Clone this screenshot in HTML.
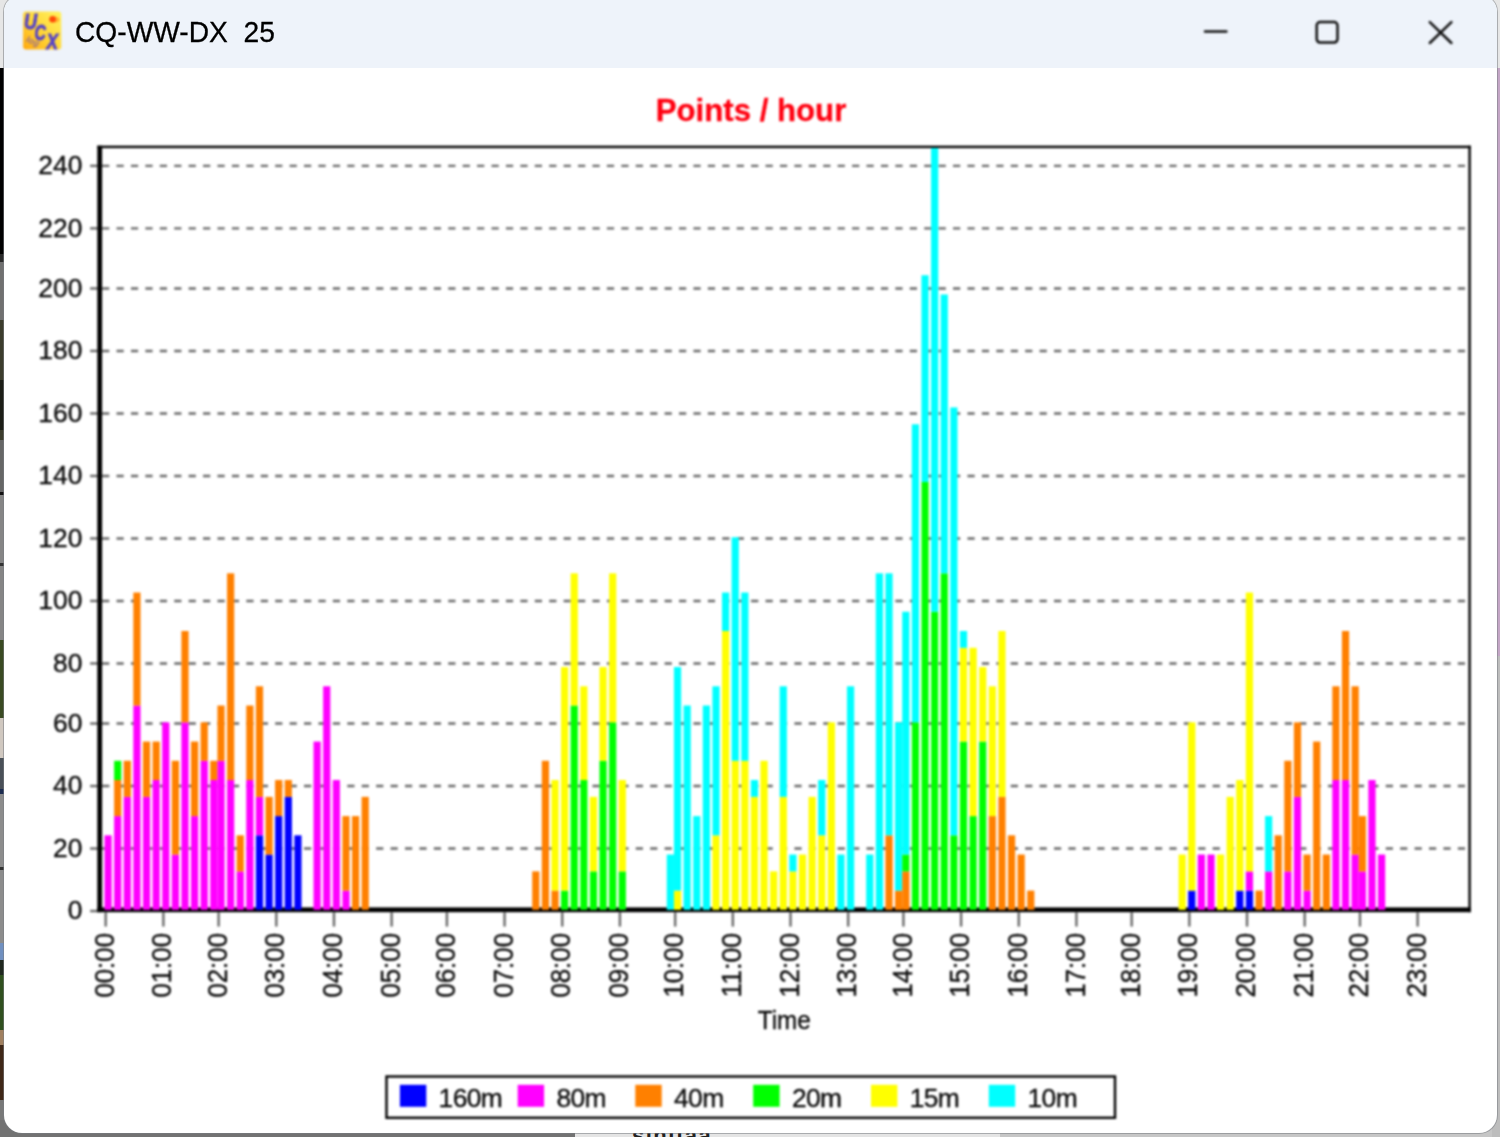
<!DOCTYPE html>
<html lang="en">
<head>
<meta charset="utf-8">
<title>CQ-WW-DX 25</title>
<style>
html,body{margin:0;padding:0}
body{width:1500px;height:1137px;overflow:hidden;position:relative;background:#7c7c7c;font-family:"Liberation Sans",Arial,sans-serif}
.strip{position:absolute;left:0;width:8px}
.rstrip{position:absolute;right:0;width:8px}
#win{position:absolute;left:3.6px;top:-5px;width:1493.6px;height:1137.6px;border-radius:17px 17px 18px 18px;background:#fff;overflow:hidden;box-shadow:0 0 0 1px rgba(120,124,130,.55)}
#tb{position:absolute;left:0;top:0;right:0;height:72.6px;background:#eef3fa}
#ttl{position:absolute;left:71.6px;top:20.2px;font-size:29.4px;line-height:34px;color:#000;-webkit-text-stroke:.3px #000;white-space:pre;transform:scaleX(.959);transform-origin:0 0}
svg{position:absolute;left:0;top:0;filter:blur(.9px)}
#win{filter:blur(.7px)}
svg text{font-family:"Liberation Sans",Arial,sans-serif;font-size:26.4px;fill:#0a0a0a;stroke:#0a0a0a;stroke-width:.35px}
.g{stroke:#6a6a6a;stroke-width:2.4;stroke-dasharray:7.2114 7.2114}
</style>
</head>
<body>
<div class="strip" style="top:0;height:68px;background:#e6e6e6"></div>
<div class="strip" style="top:68px;height:190px;background:#000"></div>
<div class="strip" style="top:258px;height:62px;background:#707070"></div>
<div class="strip" style="top:320px;height:120px;background:#3c3c2c"></div>
<div class="strip" style="top:440px;height:55px;background:#666"></div>
<div class="strip" style="top:495px;height:145px;background:#858585"></div>
<div class="strip" style="top:640px;height:78px;background:#3a4a22"></div>
<div class="strip" style="top:718px;height:40px;background:#d0c8c0"></div>
<div class="strip" style="top:758px;height:36px;background:#4a5058"></div>
<div class="strip" style="top:794px;height:149px;background:#8c8c8c"></div>
<div class="strip" style="top:943px;height:17px;background:#7090c0"></div>
<div class="strip" style="top:960px;height:15px;background:#202820"></div>
<div class="strip" style="top:975px;height:55px;background:#305020"></div>
<div class="strip" style="top:1030px;height:15px;background:#a08060"></div>
<div class="strip" style="top:1045px;height:55px;background:#402818"></div>
<div class="strip" style="top:1100px;height:37px;background:#787878"></div>
<div class="strip" style="top:254px;height:8px;background:#2a2a2a"></div>
<div class="strip" style="top:380px;height:50px;background:#1c1e16"></div>
<div class="strip" style="top:492px;height:3px;background:#111"></div>
<div class="strip" style="top:563px;height:3px;background:#333"></div>
<div class="strip" style="top:789px;height:5px;background:#1c2c50"></div>
<div class="strip" style="top:867px;height:3px;background:#333"></div>
<div style="position:absolute;left:0;top:1120px;width:575px;height:17px;background:#727272"></div>
<div style="position:absolute;left:575px;top:1120px;width:425px;height:17px;background:#e4e4e4"></div>
<div style="position:absolute;left:1000px;top:1120px;width:500px;height:17px;background:#c6c6c6"></div>
<div style="position:absolute;left:632px;top:1125px;font-size:22px;line-height:22px;font-weight:bold;color:#222;letter-spacing:1.5px">sınıfaa</div>
<div class="rstrip" style="top:0;height:68px;background:#e6e6e6"></div>
<div class="rstrip" style="top:68px;height:588px;background:#c4a6c6"></div>
<div class="rstrip" style="top:656px;height:481px;background:#bdbdbd"></div>

<div id="win">
  <div id="tb"></div>
  <div id="ttl">CQ-WW-DX  25</div>
</div>

<svg width="1500" height="1137" viewBox="0 0 1500 1137">
  <defs>
    <linearGradient id="ig" x1="1" y1="0" x2="0" y2="1">
      <stop offset="0" stop-color="#fff25e"/>
      <stop offset="0.5" stop-color="#ffd83a"/>
      <stop offset="1" stop-color="#ffa80e"/>
    </linearGradient>
  </defs>
  <!-- app icon -->
  <g>
    <rect x="23.1" y="11.4" width="38.2" height="38.1" rx="3" fill="url(#ig)"/>
    <ellipse cx="54.5" cy="19.6" rx="5" ry="3" fill="#ff9a20" opacity=".7"/>
    <circle cx="52.6" cy="19.2" r="3.3" fill="#ff4a08"/>
    <g style="font-weight:bold;font-style:italic;fill:#5c4cc6;stroke:none">
      <text transform="translate(24 28.8) scale(.8 1)" style="font-size:22.6px;fill:#5443c8;stroke:#5443c8;stroke-width:.9px">U</text>
      <text transform="translate(34.6 39.7) scale(.7 1)" style="font-size:22.4px;fill:#5443c8;stroke:#5443c8;stroke-width:.9px">C</text>
      <text transform="translate(46.6 48.7) scale(.8 1)" style="font-size:21.4px;fill:#5443c8;stroke:#5443c8;stroke-width:.9px">X</text>
      <text transform="translate(25.5 41.5) rotate(22)" style="font-size:9px;fill:#7a58b0;opacity:.75;stroke:none">log</text>
    </g>
  </g>
  <!-- window buttons -->
  <g fill="none" stroke="#111" stroke-width="2.5" stroke-linecap="round">
    <line x1="1205" y1="31.4" x2="1226.4" y2="31.4"/>
    <rect x="1316.7" y="22.1" width="20.8" height="20.4" rx="3.4"/>
    <path d="M1429.8 22.2 L1451.4 43 M1451.4 22.2 L1429.8 43"/>
  </g>

  <!-- chart title -->
  <text x="751" y="120.7" text-anchor="middle" style="font-size:31.2px;font-weight:bold;fill:#ff0010;stroke:#ff0010;stroke-width:.3px">Points / hour</text>

  <!-- grid -->
<line x1="102.1" y1="848.54" x2="1468.4" y2="848.54" class="g"/>
<line x1="102.1" y1="786.04" x2="1468.4" y2="786.04" class="g"/>
<line x1="102.1" y1="723.54" x2="1468.4" y2="723.54" class="g"/>
<line x1="102.1" y1="663.45" x2="1468.4" y2="663.45" class="g"/>
<line x1="102.1" y1="600.95" x2="1468.4" y2="600.95" class="g"/>
<line x1="102.1" y1="538.45" x2="1468.4" y2="538.45" class="g"/>
<line x1="102.1" y1="475.95" x2="1468.4" y2="475.95" class="g"/>
<line x1="102.1" y1="413.45" x2="1468.4" y2="413.45" class="g"/>
<line x1="102.1" y1="350.95" x2="1468.4" y2="350.95" class="g"/>
<line x1="102.1" y1="288.46" x2="1468.4" y2="288.46" class="g"/>
<line x1="102.1" y1="228.36" x2="1468.4" y2="228.36" class="g"/>
<line x1="102.1" y1="165.86" x2="1468.4" y2="165.86" class="g"/>
<rect x="90.1" y="909.84" width="7.6" height="2.4" fill="#6a6a6a"/>
<rect x="90.1" y="847.34" width="7.6" height="2.4" fill="#6a6a6a"/>
<rect x="90.1" y="784.84" width="7.6" height="2.4" fill="#6a6a6a"/>
<rect x="90.1" y="722.34" width="7.6" height="2.4" fill="#6a6a6a"/>
<rect x="90.1" y="662.25" width="7.6" height="2.4" fill="#6a6a6a"/>
<rect x="90.1" y="599.75" width="7.6" height="2.4" fill="#6a6a6a"/>
<rect x="90.1" y="537.25" width="7.6" height="2.4" fill="#6a6a6a"/>
<rect x="90.1" y="474.75" width="7.6" height="2.4" fill="#6a6a6a"/>
<rect x="90.1" y="412.25" width="7.6" height="2.4" fill="#6a6a6a"/>
<rect x="90.1" y="349.75" width="7.6" height="2.4" fill="#6a6a6a"/>
<rect x="90.1" y="287.26" width="7.6" height="2.4" fill="#6a6a6a"/>
<rect x="90.1" y="227.16" width="7.6" height="2.4" fill="#6a6a6a"/>
<rect x="90.1" y="164.66" width="7.6" height="2.4" fill="#6a6a6a"/>
  <!-- frame: top and right -->
  <rect x="97.3" y="145.7" width="1373.5" height="2.4" fill="#000"/>
  <rect x="1468.4" y="145.7" width="2.4" height="766.5" fill="#000"/>
  <!-- axes -->
  <rect x="97.3" y="145.7" width="4.8" height="766.5" fill="#000"/>
  <rect x="97.3" y="907.4" width="1373.5" height="4.8" fill="#000"/>
  <!-- bars -->
<rect x="104.5" y="835.32" width="7.2" height="74.52" fill="#ff00ff"/>
<rect x="114.11" y="816.09" width="7.2" height="93.75" fill="#ff00ff"/>
<rect x="114.11" y="780.03" width="7.2" height="36.06" fill="#ff8000"/>
<rect x="114.11" y="760.8" width="7.2" height="19.23" fill="#00ff00"/>
<rect x="123.72" y="796.86" width="7.2" height="112.98" fill="#ff00ff"/>
<rect x="123.72" y="760.8" width="7.2" height="36.06" fill="#ff8000"/>
<rect x="133.33" y="705.52" width="7.2" height="204.32" fill="#ff00ff"/>
<rect x="133.33" y="592.54" width="7.2" height="112.98" fill="#ff8000"/>
<rect x="142.94" y="796.86" width="7.2" height="112.98" fill="#ff00ff"/>
<rect x="142.94" y="741.57" width="7.2" height="55.29" fill="#ff8000"/>
<rect x="152.56" y="780.03" width="7.2" height="129.81" fill="#ff00ff"/>
<rect x="152.56" y="741.57" width="7.2" height="38.46" fill="#ff8000"/>
<rect x="162.17" y="722.34" width="7.2" height="187.5" fill="#ff00ff"/>
<rect x="171.78" y="854.55" width="7.2" height="55.29" fill="#ff00ff"/>
<rect x="171.78" y="760.8" width="7.2" height="93.75" fill="#ff8000"/>
<rect x="181.39" y="722.34" width="7.2" height="187.5" fill="#ff00ff"/>
<rect x="181.39" y="631" width="7.2" height="91.34" fill="#ff8000"/>
<rect x="191" y="816.09" width="7.2" height="93.75" fill="#ff00ff"/>
<rect x="191" y="741.57" width="7.2" height="74.52" fill="#ff8000"/>
<rect x="200.61" y="760.8" width="7.2" height="149.04" fill="#ff00ff"/>
<rect x="200.61" y="722.34" width="7.2" height="38.46" fill="#ff8000"/>
<rect x="210.22" y="780.03" width="7.2" height="129.81" fill="#ff00ff"/>
<rect x="210.22" y="760.8" width="7.2" height="19.23" fill="#ff8000"/>
<rect x="217.43" y="760.8" width="7.2" height="149.04" fill="#ff00ff"/>
<rect x="217.43" y="705.52" width="7.2" height="55.29" fill="#ff8000"/>
<rect x="227.04" y="780.03" width="7.2" height="129.81" fill="#ff00ff"/>
<rect x="227.04" y="573.31" width="7.2" height="206.73" fill="#ff8000"/>
<rect x="236.65" y="871.38" width="7.2" height="38.46" fill="#ff00ff"/>
<rect x="236.65" y="835.32" width="7.2" height="36.06" fill="#ff8000"/>
<rect x="246.27" y="780.03" width="7.2" height="129.81" fill="#ff00ff"/>
<rect x="246.27" y="705.52" width="7.2" height="74.52" fill="#ff8000"/>
<rect x="255.88" y="835.32" width="7.2" height="74.52" fill="#0000ff"/>
<rect x="255.88" y="796.86" width="7.2" height="38.46" fill="#ff00ff"/>
<rect x="255.88" y="686.28" width="7.2" height="110.57" fill="#ff8000"/>
<rect x="265.49" y="854.55" width="7.2" height="55.29" fill="#0000ff"/>
<rect x="265.49" y="796.86" width="7.2" height="57.69" fill="#ff8000"/>
<rect x="275.1" y="816.09" width="7.2" height="93.75" fill="#0000ff"/>
<rect x="275.1" y="780.03" width="7.2" height="36.06" fill="#ff8000"/>
<rect x="284.71" y="796.86" width="7.2" height="112.98" fill="#0000ff"/>
<rect x="284.71" y="780.03" width="7.2" height="16.83" fill="#ff8000"/>
<rect x="294.32" y="835.32" width="7.2" height="74.52" fill="#0000ff"/>
<rect x="313.54" y="741.57" width="7.2" height="168.27" fill="#ff00ff"/>
<rect x="323.15" y="686.28" width="7.2" height="223.55" fill="#ff00ff"/>
<rect x="332.77" y="780.03" width="7.2" height="129.81" fill="#ff00ff"/>
<rect x="342.38" y="890.61" width="7.2" height="19.23" fill="#ff00ff"/>
<rect x="342.38" y="816.09" width="7.2" height="74.52" fill="#ff8000"/>
<rect x="351.99" y="816.09" width="7.2" height="93.75" fill="#ff8000"/>
<rect x="361.6" y="796.86" width="7.2" height="112.98" fill="#ff8000"/>
<rect x="532.2" y="871.38" width="7.2" height="38.46" fill="#ff8000"/>
<rect x="541.81" y="760.8" width="7.2" height="149.04" fill="#ff8000"/>
<rect x="551.42" y="890.61" width="7.2" height="19.23" fill="#ff8000"/>
<rect x="551.42" y="780.03" width="7.2" height="110.57" fill="#ffff00"/>
<rect x="561.03" y="890.61" width="7.2" height="19.23" fill="#00ff00"/>
<rect x="561.03" y="667.05" width="7.2" height="223.55" fill="#ffff00"/>
<rect x="570.64" y="705.52" width="7.2" height="204.32" fill="#00ff00"/>
<rect x="570.64" y="573.31" width="7.2" height="132.21" fill="#ffff00"/>
<rect x="580.25" y="780.03" width="7.2" height="129.81" fill="#00ff00"/>
<rect x="580.25" y="686.28" width="7.2" height="93.75" fill="#ffff00"/>
<rect x="589.87" y="871.38" width="7.2" height="38.46" fill="#00ff00"/>
<rect x="589.87" y="796.86" width="7.2" height="74.52" fill="#ffff00"/>
<rect x="599.48" y="760.8" width="7.2" height="149.04" fill="#00ff00"/>
<rect x="599.48" y="667.05" width="7.2" height="93.75" fill="#ffff00"/>
<rect x="609.09" y="722.34" width="7.2" height="187.5" fill="#00ff00"/>
<rect x="609.09" y="573.31" width="7.2" height="149.04" fill="#ffff00"/>
<rect x="618.7" y="871.38" width="7.2" height="38.46" fill="#00ff00"/>
<rect x="618.7" y="780.03" width="7.2" height="91.34" fill="#ffff00"/>
<rect x="666.76" y="854.55" width="7.2" height="55.29" fill="#00ffff"/>
<rect x="673.96" y="890.61" width="7.2" height="19.23" fill="#ffff00"/>
<rect x="673.96" y="667.05" width="7.2" height="223.55" fill="#00ffff"/>
<rect x="683.57" y="705.52" width="7.2" height="204.32" fill="#00ffff"/>
<rect x="693.19" y="816.09" width="7.2" height="93.75" fill="#00ffff"/>
<rect x="702.8" y="705.52" width="7.2" height="204.32" fill="#00ffff"/>
<rect x="712.41" y="835.32" width="7.2" height="74.52" fill="#ffff00"/>
<rect x="712.41" y="686.28" width="7.2" height="149.04" fill="#00ffff"/>
<rect x="722.02" y="631" width="7.2" height="278.84" fill="#ffff00"/>
<rect x="722.02" y="592.54" width="7.2" height="38.46" fill="#00ffff"/>
<rect x="731.63" y="760.8" width="7.2" height="149.04" fill="#ffff00"/>
<rect x="731.63" y="537.25" width="7.2" height="223.55" fill="#00ffff"/>
<rect x="741.24" y="760.8" width="7.2" height="149.04" fill="#ffff00"/>
<rect x="741.24" y="592.54" width="7.2" height="168.27" fill="#00ffff"/>
<rect x="750.85" y="796.86" width="7.2" height="112.98" fill="#ffff00"/>
<rect x="750.85" y="780.03" width="7.2" height="16.83" fill="#00ffff"/>
<rect x="760.46" y="760.8" width="7.2" height="149.04" fill="#ffff00"/>
<rect x="770.08" y="871.38" width="7.2" height="38.46" fill="#ffff00"/>
<rect x="779.69" y="796.86" width="7.2" height="112.98" fill="#ffff00"/>
<rect x="779.69" y="686.28" width="7.2" height="110.57" fill="#00ffff"/>
<rect x="789.3" y="871.38" width="7.2" height="38.46" fill="#ffff00"/>
<rect x="789.3" y="854.55" width="7.2" height="16.83" fill="#00ffff"/>
<rect x="798.91" y="854.55" width="7.2" height="55.29" fill="#ffff00"/>
<rect x="808.52" y="796.86" width="7.2" height="112.98" fill="#ffff00"/>
<rect x="818.13" y="835.32" width="7.2" height="74.52" fill="#ffff00"/>
<rect x="818.13" y="780.03" width="7.2" height="55.29" fill="#00ffff"/>
<rect x="827.74" y="722.34" width="7.2" height="187.5" fill="#ffff00"/>
<rect x="837.35" y="854.55" width="7.2" height="55.29" fill="#00ffff"/>
<rect x="846.97" y="686.28" width="7.2" height="223.55" fill="#00ffff"/>
<rect x="866.19" y="854.55" width="7.2" height="55.29" fill="#00ffff"/>
<rect x="875.8" y="573.31" width="7.2" height="336.53" fill="#00ffff"/>
<rect x="885.41" y="835.32" width="7.2" height="74.52" fill="#ff8000"/>
<rect x="885.41" y="573.31" width="7.2" height="262.01" fill="#00ffff"/>
<rect x="895.02" y="890.61" width="7.2" height="19.23" fill="#ff8000"/>
<rect x="895.02" y="722.34" width="7.2" height="168.27" fill="#00ffff"/>
<rect x="902.23" y="871.38" width="7.2" height="38.46" fill="#ff8000"/>
<rect x="902.23" y="854.55" width="7.2" height="16.83" fill="#00ff00"/>
<rect x="902.23" y="611.77" width="7.2" height="242.78" fill="#00ffff"/>
<rect x="911.84" y="722.34" width="7.2" height="187.5" fill="#00ff00"/>
<rect x="911.84" y="424.27" width="7.2" height="298.07" fill="#00ffff"/>
<rect x="921.45" y="481.96" width="7.2" height="427.88" fill="#00ff00"/>
<rect x="921.45" y="275.24" width="7.2" height="206.73" fill="#00ffff"/>
<rect x="931.06" y="611.77" width="7.2" height="298.07" fill="#00ff00"/>
<rect x="931.06" y="148.1" width="7.2" height="463.67" fill="#00ffff"/>
<rect x="940.67" y="573.31" width="7.2" height="336.53" fill="#00ff00"/>
<rect x="940.67" y="294.47" width="7.2" height="278.84" fill="#00ffff"/>
<rect x="950.29" y="835.32" width="7.2" height="74.52" fill="#00ff00"/>
<rect x="950.29" y="407.44" width="7.2" height="427.88" fill="#00ffff"/>
<rect x="959.9" y="741.57" width="7.2" height="168.27" fill="#00ff00"/>
<rect x="959.9" y="647.82" width="7.2" height="93.75" fill="#ffff00"/>
<rect x="959.9" y="631" width="7.2" height="16.83" fill="#00ffff"/>
<rect x="969.51" y="816.09" width="7.2" height="93.75" fill="#00ff00"/>
<rect x="969.51" y="647.82" width="7.2" height="168.27" fill="#ffff00"/>
<rect x="979.12" y="741.57" width="7.2" height="168.27" fill="#00ff00"/>
<rect x="979.12" y="667.05" width="7.2" height="74.52" fill="#ffff00"/>
<rect x="988.73" y="816.09" width="7.2" height="93.75" fill="#ff8000"/>
<rect x="988.73" y="686.28" width="7.2" height="129.81" fill="#ffff00"/>
<rect x="998.34" y="796.86" width="7.2" height="112.98" fill="#ff8000"/>
<rect x="998.34" y="631" width="7.2" height="165.86" fill="#ffff00"/>
<rect x="1007.95" y="835.32" width="7.2" height="74.52" fill="#ff8000"/>
<rect x="1017.56" y="854.55" width="7.2" height="55.29" fill="#ff8000"/>
<rect x="1027.18" y="890.61" width="7.2" height="19.23" fill="#ff8000"/>
<rect x="1178.55" y="854.55" width="7.2" height="55.29" fill="#ffff00"/>
<rect x="1188.16" y="890.61" width="7.2" height="19.23" fill="#0000ff"/>
<rect x="1188.16" y="722.34" width="7.2" height="168.27" fill="#ffff00"/>
<rect x="1197.77" y="854.55" width="7.2" height="55.29" fill="#ff00ff"/>
<rect x="1207.39" y="854.55" width="7.2" height="55.29" fill="#ff00ff"/>
<rect x="1217" y="854.55" width="7.2" height="55.29" fill="#ffff00"/>
<rect x="1226.61" y="796.86" width="7.2" height="112.98" fill="#ffff00"/>
<rect x="1236.22" y="890.61" width="7.2" height="19.23" fill="#0000ff"/>
<rect x="1236.22" y="780.03" width="7.2" height="110.57" fill="#ffff00"/>
<rect x="1245.83" y="890.61" width="7.2" height="19.23" fill="#0000ff"/>
<rect x="1245.83" y="871.38" width="7.2" height="19.23" fill="#ff00ff"/>
<rect x="1245.83" y="592.54" width="7.2" height="278.84" fill="#ffff00"/>
<rect x="1255.44" y="890.61" width="7.2" height="19.23" fill="#ff8000"/>
<rect x="1265.05" y="871.38" width="7.2" height="38.46" fill="#ff00ff"/>
<rect x="1265.05" y="816.09" width="7.2" height="55.29" fill="#00ffff"/>
<rect x="1274.66" y="835.32" width="7.2" height="74.52" fill="#ff8000"/>
<rect x="1284.27" y="871.38" width="7.2" height="38.46" fill="#ff00ff"/>
<rect x="1284.27" y="760.8" width="7.2" height="110.57" fill="#ff8000"/>
<rect x="1293.89" y="796.86" width="7.2" height="112.98" fill="#ff00ff"/>
<rect x="1293.89" y="722.34" width="7.2" height="74.52" fill="#ff8000"/>
<rect x="1303.5" y="890.61" width="7.2" height="19.23" fill="#ff00ff"/>
<rect x="1303.5" y="854.55" width="7.2" height="36.06" fill="#ff8000"/>
<rect x="1313.11" y="741.57" width="7.2" height="168.27" fill="#ff8000"/>
<rect x="1322.72" y="854.55" width="7.2" height="55.29" fill="#ff8000"/>
<rect x="1332.33" y="780.03" width="7.2" height="129.81" fill="#ff00ff"/>
<rect x="1332.33" y="686.28" width="7.2" height="93.75" fill="#ff8000"/>
<rect x="1341.94" y="780.03" width="7.2" height="129.81" fill="#ff00ff"/>
<rect x="1341.94" y="631" width="7.2" height="149.04" fill="#ff8000"/>
<rect x="1351.55" y="854.55" width="7.2" height="55.29" fill="#ff00ff"/>
<rect x="1351.55" y="686.28" width="7.2" height="168.27" fill="#ff8000"/>
<rect x="1358.76" y="871.38" width="7.2" height="38.46" fill="#ff00ff"/>
<rect x="1358.76" y="816.09" width="7.2" height="55.29" fill="#ff8000"/>
<rect x="1368.37" y="780.03" width="7.2" height="129.81" fill="#ff00ff"/>
<rect x="1377.98" y="854.55" width="7.2" height="55.29" fill="#ff00ff"/>
  <!-- x ticks -->
<rect x="104.5" y="912.2" width="2.4" height="14.4" fill="#6a6a6a"/>
<rect x="162.17" y="912.2" width="2.4" height="14.4" fill="#6a6a6a"/>
<rect x="217.43" y="912.2" width="2.4" height="14.4" fill="#6a6a6a"/>
<rect x="275.1" y="912.2" width="2.4" height="14.4" fill="#6a6a6a"/>
<rect x="332.77" y="912.2" width="2.4" height="14.4" fill="#6a6a6a"/>
<rect x="390.43" y="912.2" width="2.4" height="14.4" fill="#6a6a6a"/>
<rect x="445.7" y="912.2" width="2.4" height="14.4" fill="#6a6a6a"/>
<rect x="503.36" y="912.2" width="2.4" height="14.4" fill="#6a6a6a"/>
<rect x="561.03" y="912.2" width="2.4" height="14.4" fill="#6a6a6a"/>
<rect x="618.7" y="912.2" width="2.4" height="14.4" fill="#6a6a6a"/>
<rect x="673.96" y="912.2" width="2.4" height="14.4" fill="#6a6a6a"/>
<rect x="731.63" y="912.2" width="2.4" height="14.4" fill="#6a6a6a"/>
<rect x="789.3" y="912.2" width="2.4" height="14.4" fill="#6a6a6a"/>
<rect x="846.97" y="912.2" width="2.4" height="14.4" fill="#6a6a6a"/>
<rect x="902.23" y="912.2" width="2.4" height="14.4" fill="#6a6a6a"/>
<rect x="959.9" y="912.2" width="2.4" height="14.4" fill="#6a6a6a"/>
<rect x="1017.56" y="912.2" width="2.4" height="14.4" fill="#6a6a6a"/>
<rect x="1075.23" y="912.2" width="2.4" height="14.4" fill="#6a6a6a"/>
<rect x="1130.5" y="912.2" width="2.4" height="14.4" fill="#6a6a6a"/>
<rect x="1188.16" y="912.2" width="2.4" height="14.4" fill="#6a6a6a"/>
<rect x="1245.83" y="912.2" width="2.4" height="14.4" fill="#6a6a6a"/>
<rect x="1303.5" y="912.2" width="2.4" height="14.4" fill="#6a6a6a"/>
<rect x="1358.76" y="912.2" width="2.4" height="14.4" fill="#6a6a6a"/>
<rect x="1416.43" y="912.2" width="2.4" height="14.4" fill="#6a6a6a"/>
  <!-- x labels -->
<text transform="translate(113.8 965.3) rotate(-90)" text-anchor="middle" textLength="64.6" lengthAdjust="spacingAndGlyphs" style="font-size:27.4px">00:00</text>
<text transform="translate(171.47 965.3) rotate(-90)" text-anchor="middle" textLength="64.6" lengthAdjust="spacingAndGlyphs" style="font-size:27.4px">01:00</text>
<text transform="translate(226.73 965.3) rotate(-90)" text-anchor="middle" textLength="64.6" lengthAdjust="spacingAndGlyphs" style="font-size:27.4px">02:00</text>
<text transform="translate(284.4 965.3) rotate(-90)" text-anchor="middle" textLength="64.6" lengthAdjust="spacingAndGlyphs" style="font-size:27.4px">03:00</text>
<text transform="translate(342.07 965.3) rotate(-90)" text-anchor="middle" textLength="64.6" lengthAdjust="spacingAndGlyphs" style="font-size:27.4px">04:00</text>
<text transform="translate(399.73 965.3) rotate(-90)" text-anchor="middle" textLength="64.6" lengthAdjust="spacingAndGlyphs" style="font-size:27.4px">05:00</text>
<text transform="translate(455 965.3) rotate(-90)" text-anchor="middle" textLength="64.6" lengthAdjust="spacingAndGlyphs" style="font-size:27.4px">06:00</text>
<text transform="translate(512.66 965.3) rotate(-90)" text-anchor="middle" textLength="64.6" lengthAdjust="spacingAndGlyphs" style="font-size:27.4px">07:00</text>
<text transform="translate(570.33 965.3) rotate(-90)" text-anchor="middle" textLength="64.6" lengthAdjust="spacingAndGlyphs" style="font-size:27.4px">08:00</text>
<text transform="translate(628 965.3) rotate(-90)" text-anchor="middle" textLength="64.6" lengthAdjust="spacingAndGlyphs" style="font-size:27.4px">09:00</text>
<text transform="translate(683.26 965.3) rotate(-90)" text-anchor="middle" textLength="64.6" lengthAdjust="spacingAndGlyphs" style="font-size:27.4px">10:00</text>
<text transform="translate(740.93 965.3) rotate(-90)" text-anchor="middle" textLength="64.6" lengthAdjust="spacingAndGlyphs" style="font-size:27.4px">11:00</text>
<text transform="translate(798.6 965.3) rotate(-90)" text-anchor="middle" textLength="64.6" lengthAdjust="spacingAndGlyphs" style="font-size:27.4px">12:00</text>
<text transform="translate(856.27 965.3) rotate(-90)" text-anchor="middle" textLength="64.6" lengthAdjust="spacingAndGlyphs" style="font-size:27.4px">13:00</text>
<text transform="translate(911.53 965.3) rotate(-90)" text-anchor="middle" textLength="64.6" lengthAdjust="spacingAndGlyphs" style="font-size:27.4px">14:00</text>
<text transform="translate(969.2 965.3) rotate(-90)" text-anchor="middle" textLength="64.6" lengthAdjust="spacingAndGlyphs" style="font-size:27.4px">15:00</text>
<text transform="translate(1026.86 965.3) rotate(-90)" text-anchor="middle" textLength="64.6" lengthAdjust="spacingAndGlyphs" style="font-size:27.4px">16:00</text>
<text transform="translate(1084.53 965.3) rotate(-90)" text-anchor="middle" textLength="64.6" lengthAdjust="spacingAndGlyphs" style="font-size:27.4px">17:00</text>
<text transform="translate(1139.8 965.3) rotate(-90)" text-anchor="middle" textLength="64.6" lengthAdjust="spacingAndGlyphs" style="font-size:27.4px">18:00</text>
<text transform="translate(1197.46 965.3) rotate(-90)" text-anchor="middle" textLength="64.6" lengthAdjust="spacingAndGlyphs" style="font-size:27.4px">19:00</text>
<text transform="translate(1255.13 965.3) rotate(-90)" text-anchor="middle" textLength="64.6" lengthAdjust="spacingAndGlyphs" style="font-size:27.4px">20:00</text>
<text transform="translate(1312.8 965.3) rotate(-90)" text-anchor="middle" textLength="64.6" lengthAdjust="spacingAndGlyphs" style="font-size:27.4px">21:00</text>
<text transform="translate(1368.06 965.3) rotate(-90)" text-anchor="middle" textLength="64.6" lengthAdjust="spacingAndGlyphs" style="font-size:27.4px">22:00</text>
<text transform="translate(1425.73 965.3) rotate(-90)" text-anchor="middle" textLength="64.6" lengthAdjust="spacingAndGlyphs" style="font-size:27.4px">23:00</text>
  <!-- y labels -->
<text x="82.4" y="919.34" text-anchor="end">0</text>
<text x="82.4" y="856.84" text-anchor="end">20</text>
<text x="82.4" y="794.34" text-anchor="end">40</text>
<text x="82.4" y="731.84" text-anchor="end">60</text>
<text x="82.4" y="671.75" text-anchor="end">80</text>
<text x="82.4" y="609.25" text-anchor="end">100</text>
<text x="82.4" y="546.75" text-anchor="end">120</text>
<text x="82.4" y="484.25" text-anchor="end">140</text>
<text x="82.4" y="421.75" text-anchor="end">160</text>
<text x="82.4" y="359.25" text-anchor="end">180</text>
<text x="82.4" y="296.76" text-anchor="end">200</text>
<text x="82.4" y="236.66" text-anchor="end">220</text>
<text x="82.4" y="174.16" text-anchor="end">240</text>
  <text x="784.3" y="1029.2" text-anchor="middle" textLength="53" lengthAdjust="spacingAndGlyphs">Time</text>
  <!-- legend -->
  <rect x="386.5" y="1076.5" width="728.5" height="41.3" fill="#fff" stroke="#000" stroke-width="2.4"/>
<rect x="399.9" y="1084.8" width="26.4" height="22" fill="#0000ff"/>
<text x="438.6" y="1106.9" style="letter-spacing:-.6px">160m</text>
<rect x="517.7" y="1084.8" width="26.4" height="22" fill="#ff00ff"/>
<text x="556.4" y="1106.9" style="letter-spacing:-.6px">80m</text>
<rect x="635.3" y="1084.8" width="26.4" height="22" fill="#ff8000"/>
<text x="674" y="1106.9" style="letter-spacing:-.6px">40m</text>
<rect x="753.2" y="1084.8" width="26.4" height="22" fill="#00ff00"/>
<text x="791.9" y="1106.9" style="letter-spacing:-.6px">20m</text>
<rect x="871" y="1084.8" width="26.4" height="22" fill="#ffff00"/>
<text x="909.7" y="1106.9" style="letter-spacing:-.6px">15m</text>
<rect x="988.8" y="1084.8" width="26.4" height="22" fill="#00ffff"/>
<text x="1027.5" y="1106.9" style="letter-spacing:-.6px">10m</text>
</svg>
</body>
</html>
